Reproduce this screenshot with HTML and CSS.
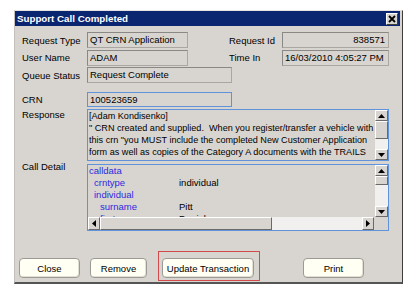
FILE: index.html
```html
<!DOCTYPE html>
<html>
<head>
<meta charset="utf-8">
<link rel="stylesheet" href="styles.css">
</head>
<body>
<div class="win">
  <div class="title">
    <span class="ttext">Support Call Completed</span>
    <span class="xbtn"><svg width="8" height="8" viewBox="0 0 8 8"><path d="M1 1 L7 7 M7 1 L1 7" stroke="#000" stroke-width="1.8"/></svg></span>
  </div>
  <div class="body">
    <div class="row">
      <span class="lbl">Request Type</span>
      <span class="fld w1">QT CRN Application</span>
      <span class="lbl2">Request Id</span>
      <span class="fld w2 right">838571</span>
    </div>
    <div class="row">
      <span class="lbl">User Name</span>
      <span class="fld w1">ADAM</span>
      <span class="lbl2">Time In</span>
      <span class="fld w2">16/03/2010 4:05:27 PM</span>
    </div>
    <div class="row">
      <span class="lbl">Queue Status</span>
      <span class="fld w3">Request Complete</span>
    </div>
    <div class="row crnrow">
      <span class="lbl">CRN</span>
      <span class="fld w3 blue">100523659</span>
    </div>
    <div class="row resprow">
      <span class="lbl top">Response</span>
      <div class="box resp">
        <div class="resptext">[Adam Kondisenko]<br>" CRN created and supplied.&nbsp; When you register/transfer a vehicle with<br>this crn "you MUST include the completed New Customer Application<br>form as well as copies of the Category A documents with the TRAILS<br>filing "</div>
        <div class="vbar">
          <div class="sbtn"><svg width="7" height="4" viewBox="0 0 7 4"><polygon points="3.5,0 7,4 0,4" fill="#000"/></svg></div>
          <div class="thumb t1"></div>
          <div class="track"></div>
          <div class="sbtn"><svg width="7" height="4" viewBox="0 0 7 4"><polygon points="0,0 7,0 3.5,4" fill="#000"/></svg></div>
        </div>
      </div>
    </div>
    <div class="row detrow">
      <span class="lbl top up">Call Detail</span>
      <div class="box det">
        <div class="detmain">
          <div class="tree">
            <div class="node"><span class="k d0">calldata</span></div>
            <div class="node"><span class="k d1">crntype</span><span class="v">individual</span></div>
            <div class="node"><span class="k d1">individual</span></div>
            <div class="node"><span class="k d2">surname</span><span class="v">Pitt</span></div>
            <div class="node"><span class="k d2">firstname</span><span class="v">Daniel</span></div>
          </div>
          <div class="vbar">
            <div class="sbtn"><svg width="7" height="4" viewBox="0 0 7 4"><polygon points="3.5,0 7,4 0,4" fill="#000"/></svg></div>
            <div class="thumb t2"></div>
            <div class="track"></div>
            <div class="sbtn"><svg width="7" height="4" viewBox="0 0 7 4"><polygon points="0,0 7,0 3.5,4" fill="#000"/></svg></div>
          </div>
        </div>
        <div class="hbar">
          <div class="sbtn h"><svg width="4" height="7" viewBox="0 0 4 7"><polygon points="0,3.5 4,0 4,7" fill="#000"/></svg></div>
          <div class="thumb th"></div>
          <div class="track"></div>
          <div class="sbtn h"><svg width="4" height="7" viewBox="0 0 4 7"><polygon points="0,0 4,3.5 0,7" fill="#000"/></svg></div>
          <div class="corner"></div>
        </div>
      </div>
    </div>
    <div class="btnrow">
      <button class="btn b-close">Close</button>
      <button class="btn b-remove">Remove</button>
      <span class="hl"><button class="btn b-update">Update Transaction</button></span>
      <button class="btn b-print">Print</button>
    </div>
  </div>
</div>
</body>
</html>
```
FILE: styles.css
```css
* { box-sizing: border-box; }
body {
  margin: 0;
  background: #fff;
  font-family: "Liberation Sans", Arial, sans-serif;
  font-size: 9.5px;
  color: #000;
}
.win {
  margin: 10px 0 0 14px;
  width: 389px;
  height: 274px;
  background: #d8d4cf;
  border-top: 1px solid #e6e4e0;
  border-left: 1px solid #c4c0bb;
  border-right: 1px solid #3c3c3c;
  border-bottom: 2px solid #555;
  padding-right: 2px;
}
.title {
  height: 15px;
  background: #0b2670;
  color: #fff;
  display: flex;
  align-items: center;
  justify-content: space-between;
  padding-left: 2px;
}
.ttext {
  font-weight: bold;
  font-size: 9.75px;
}
.xbtn {
  width: 12px;
  height: 12px;
  margin-right: 2px;
  background: #d8d4cf;
  border: 1px solid;
  border-color: #fff #404040 #404040 #fff;
  display: flex;
  align-items: center;
  justify-content: center;
}
.body {
  padding: 6px 0 0 7px;
}
.row {
  display: flex;
  align-items: center;
  height: 16px;
}
.row + .row { margin-top: 1.5px; }
.lbl { width: 65px; white-space: nowrap; }
.lbl2 { width: 53px; margin-left: 41px; white-space: nowrap; }
.fld {
  height: 16px;
  line-height: 14px;
  padding: 0 3px 0 2px;
  border: 1px solid;
  border-color: #8a8884 #aaa7a2 #aaa7a2 #8a8884;
  white-space: nowrap;
  overflow: hidden;
}
.w1 { width: 101px; }
.w2 { width: 107px; }
.w3 { width: 145px; }
.right { text-align: right; }
.blue { border: 1px solid #5f93dc; }
.row.crnrow { margin-top: 9px; height: 15px; }
.crnrow .fld { height: 15px; line-height: 13px; }
.row.resprow { margin-top: 2px; height: 52px; align-items: flex-start; }
.row.detrow { margin-top: 3px; height: 67px; align-items: flex-start; }
.lbl.top { line-height: 11px; }
.lbl.up { margin-top: -3px; }
.box {
  width: 302px;
  border: 1px solid #5f93dc;
  display: flex;
}
.resp { height: 52px; }
.resptext {
  flex: 1;
  overflow: hidden;
  white-space: nowrap;
  font-size: 9.1px;
  line-height: 12px;
  padding-left: 1px;
}
.vbar {
  width: 13px;
  flex: none;
  display: flex;
  flex-direction: column;
  background: #f1f0ee;
}
.sbtn {
  height: 11px;
  flex: none;
  background: #d8d4cf;
  border: 1px solid;
  border-color: #fff #6a6a6a #6a6a6a #fff;
  display: flex;
  align-items: center;
  justify-content: center;
}
.thumb {
  flex: none;
  background: #d8d4cf;
  border: 1px solid;
  border-color: #fff #6a6a6a #6a6a6a #fff;
}
.t1 { height: 18px; }
.t2 { height: 9px; }
.track { flex: 1; background: #f1f0ee; }
.det { height: 67px; flex-direction: column; }
.detmain { display: flex; height: 52px; }
.tree {
  flex: 1;
  overflow: hidden;
  line-height: 12px;
}
.node { display: flex; white-space: nowrap; }
.k { width: 91px; color: #2b2be0; }
.d0 { padding-left: 1px; }
.d1 { padding-left: 6px; }
.d2 { padding-left: 12px; }
.hbar {
  height: 13px;
  display: flex;
  background: #f1f0ee;
}
.sbtn.h { width: 12px; height: 13px; }
.th { width: 172px; height: 13px; }
.corner { width: 14px; background: #d8d4cf; }
.btnrow {
  display: flex;
  align-items: flex-start;
  margin: 20px 0 0 -3px;
  height: 30px;
}
.btn {
  font-family: "Liberation Sans", Arial, sans-serif;
  font-size: 9.5px;
  color: #000;
  height: 20px;
  padding: 0;
  background: #fffff3;
  border: 1px solid #9c9a96;
  border-radius: 4px;
  box-shadow: inset -1px -1px 0 #e2e0d2;
  margin-top: 7px;
}
.b-close { width: 61px; }
.b-remove { width: 57px; margin-left: 10px; }
.hl {
  margin-left: 11px;
  width: 102px;
  height: 30px;
  border: 1px solid #d24a4a;
  padding: 0 5px 0 3px;
}
.b-update { width: 92px; margin-top: 6px; }
.b-print { width: 61px; margin-left: 43px; }
```
